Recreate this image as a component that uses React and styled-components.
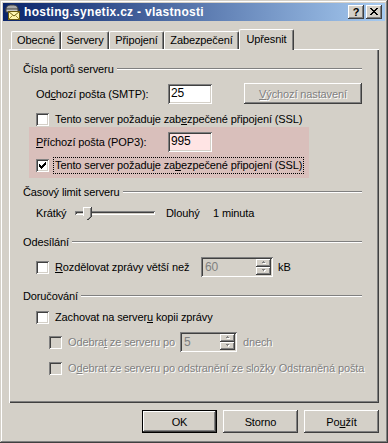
import React from 'react';
import styled, { createGlobalStyle } from 'styled-components';

const FONT = '"Liberation Sans", Arial, sans-serif';

const Global = createGlobalStyle`
  html, body { margin: 0; padding: 0; background: #d4d0c8; }
  body { font-family: ${FONT}; font-size: 11px; letter-spacing: -0.12px; color: #000; }
  * { box-sizing: border-box; }
`;

const RAISED = 'inset -1px -1px #404040, inset 1px 1px #fff, inset -2px -2px #808080, inset 2px 2px #d4d0c8';
const SUNKEN = 'inset 1px 1px #808080, inset -1px -1px #fff, inset 2px 2px #404040, inset -2px -2px #d4d0c8';

const Window = styled.div`
  width: 388px;
  height: 443px;
  padding: 3px;
  background: #d4d0c8;
  box-shadow: inset -1px -1px #404040, inset 1px 1px #d4d0c8, inset -2px -2px #808080, inset 2px 2px #fff;
  display: flex;
  flex-direction: column;
`;

const TitleBar = styled.div`
  height: 18px;
  display: flex;
  align-items: center;
  padding: 0 3px 0 1px;
  background: linear-gradient(to right, #0a246a, #a6caf0);
`;

const TitleText = styled.div`
  flex: 1;
  margin-left: 4px;
  color: #fff;
  font-weight: bold;
  font-size: 12px;
  letter-spacing: 0.3px;
  white-space: nowrap;
`;

const CaptionButton = styled.div`
  width: 16px;
  height: 14px;
  margin-left: ${(p) => p.$gap || 0}px;
  background: #d4d0c8;
  box-shadow: ${RAISED};
  display: flex;
  align-items: center;
  justify-content: center;
  font-weight: bold;
  font-size: 11px;
  line-height: 14px;
  padding-bottom: 1px;
`;

const Body = styled.div`
  flex: 1;
  display: flex;
  flex-direction: column;
  padding: 8px 6px 7px 6px;
`;

const TabStrip = styled.div`
  height: 20px;
  display: flex;
  align-items: flex-end;
  padding-left: 2px;
  position: relative;
  z-index: 2;
`;

const Tab = styled.div`
  width: ${(p) => p.$w}px;
  height: ${(p) => (p.$active ? 21 : 18)}px;
  margin-bottom: ${(p) => (p.$active ? -1 : 0)}px;
  background: #d4d0c8;
  border-top: 1px solid #fff;
  border-left: 1px solid #fff;
  border-right: 1px solid #404040;
  border-radius: 2px 2px 0 0;
  box-shadow: inset -1px 0 #808080;
  text-align: center;
  padding-top: ${(p) => (p.$active ? 3 : 2)}px;
  white-space: nowrap;
  position: relative;
`;

const Panel = styled.div`
  height: 354px;
  padding: 13px 17px 0 14px;
  background: #d4d0c8;
  box-shadow: inset 1px 1px #fff, inset -1px -1px #404040, inset -2px -2px #808080;
  display: flex;
  flex-direction: column;
  position: relative;
  z-index: 1;
`;

const Heading = styled.div`
  height: 14px;
  margin-top: ${(p) => p.$mt || 0}px;
  display: flex;
  align-items: center;
  gap: 3px;
  white-space: nowrap;
`;

const HeadingLine = styled.div`
  flex: 1;
  height: 2px;
  border-top: 1px solid #808080;
  border-bottom: 1px solid #fff;
`;

const Row = styled.div`
  display: flex;
  align-items: center;
  margin-top: ${(p) => p.$mt || 0}px;
  margin-left: ${(p) => p.$indent || 0}px;
  height: ${(p) => p.$h || 13}px;
  white-space: nowrap;
`;

const Highlight = styled.div`
  margin-top: 1px;
  margin-left: 6px;
  width: 280px;
  padding: 5px 0 6px 7px;
  background: #d9bfbb;
`;

const FieldLabel = styled.span`
  width: ${(p) => p.$w}px;
  flex: none;
  color: ${(p) => (p.$disabled ? '#808080' : '#000')};
  text-shadow: ${(p) => (p.$disabled ? '1px 1px #fff' : 'none')};
  margin-left: ${(p) => p.$ml || 0}px;
`;

const U = styled.span`
  text-decoration: underline;
`;

const Edit = styled.div`
  width: ${(p) => p.$w}px;
  height: 20px;
  padding: 0 0 0 3px;
  line-height: 19px;
  background: ${(p) => p.$bg || '#fff'};
  box-shadow: ${SUNKEN};
  flex: none;
  font-size: 12px;
`;

const Button = styled.div`
  width: ${(p) => p.$w || 75}px;
  height: ${(p) => p.$h || 23}px;
  margin-left: ${(p) => p.$ml || 0}px;
  display: flex;
  align-items: center;
  justify-content: center;
  background: #d4d0c8;
  border: ${(p) => (p.$default ? '1px solid #000' : 'none')};
  box-shadow: ${RAISED};
  color: ${(p) => (p.$disabled ? '#808080' : '#000')};
  text-shadow: ${(p) => (p.$disabled ? '1px 1px #fff' : 'none')};
  flex: none;
`;

const CheckItem = styled.div`
  display: flex;
  align-items: center;
  width: ${(p) => (p.$w ? `${p.$w}px` : 'auto')};
  flex: none;
`;

const Box = styled.span`
  width: 13px;
  height: 13px;
  flex: none;
  background: ${(p) => (p.$disabled ? '#d4d0c8' : '#fff')};
  box-shadow: ${SUNKEN};
  display: flex;
  align-items: center;
  justify-content: center;
`;

const CheckLabel = styled.span`
  margin-left: 4px;
  padding: 0 1px;
  border: 1px dotted ${(p) => (p.$focus ? '#000' : 'transparent')};
  line-height: 15px;
  color: ${(p) => (p.$disabled ? '#808080' : '#000')};
  text-shadow: ${(p) => (p.$disabled ? '1px 1px #fff' : 'none')};
`;

const Spin = styled.div`
  width: ${(p) => p.$w}px;
  height: 20px;
  flex: none;
  display: flex;
  padding: 2px;
  background: #d4d0c8;
  box-shadow: ${SUNKEN};
`;

const SpinText = styled.div`
  flex: 1;
  padding-left: 2px;
  line-height: 16px;
  color: #808080;
  font-size: 12px;
`;

const SpinButtons = styled.div`
  width: 15px;
  display: flex;
  flex-direction: column;
`;

const SpinBtn = styled.div`
  flex: 1;
  background: #d4d0c8;
  box-shadow: ${RAISED};
  display: flex;
  align-items: center;
  justify-content: center;
`;

const Text = styled.span`
  margin-left: ${(p) => p.$ml || 0}px;
  width: ${(p) => (p.$w ? `${p.$w}px` : 'auto')};
  flex: none;
  color: ${(p) => (p.$disabled ? '#808080' : '#000')};
  text-shadow: ${(p) => (p.$disabled ? '1px 1px #fff' : 'none')};
`;

const Slider = styled.div`
  width: 80px;
  height: 20px;
  flex: none;
  position: relative;
  display: flex;
  align-items: center;
`;

const Track = styled.div`
  width: 100%;
  height: 4px;
  box-shadow: ${SUNKEN};
  background: #d4d0c8;
`;

const Thumb = styled.svg`
  position: absolute;
  left: ${(p) => p.$left}px;
  top: 4px;
`;

const ButtonRow = styled.div`
  margin-top: 7px;
  display: flex;
  justify-content: flex-end;
  gap: 6px;
`;

const Check = () => (
  <svg width="9" height="9" viewBox="0 0 9 9" shapeRendering="crispEdges">
    <path d="M1 3h1v1h1v1h1v-1h1v-1h1v-1h1v-1h1v3h-1v1h-1v1h-1v1h-1v1h-1v-1h-1v-1h-1z" fill="#000" />
  </svg>
);

const Arrow = ({ down }) => (
  <svg width="5" height="4" viewBox="0 0 5 4" shapeRendering="crispEdges">
    {down ? (
      <>
        <path d="M1 1h4l-2 2z" fill="#fff" />
        <path d="M0 0h4l-2 2z" fill="#808080" />
      </>
    ) : (
      <>
        <path d="M1 3h4l-2 -2z" fill="#fff" />
        <path d="M0 2h4l-2 -2z" fill="#808080" />
      </>
    )}
  </svg>
);

const SpinBox = ({ w, value }) => (
  <Spin $w={w}>
    <SpinText>{value}</SpinText>
    <SpinButtons>
      <SpinBtn><Arrow /></SpinBtn>
      <SpinBtn><Arrow down /></SpinBtn>
    </SpinButtons>
  </Spin>
);

const CheckBox = ({ checked, disabled, focus, w, children }) => (
  <CheckItem $w={w}>
    <Box $disabled={disabled}>{checked && <Check />}</Box>
    <CheckLabel $focus={focus} $disabled={disabled}>{children}</CheckLabel>
  </CheckItem>
);

const AppIcon = () => (
  <svg width="16" height="16" viewBox="0 0 16 16">
    <path d="M2 6 C2 2 4 1 8 1 C12 1 14 2 14 6 Z" fill="#a8a8a8" stroke="#404040" strokeWidth="1" />
    <rect x="2" y="5" width="12" height="3" fill="#c8c8c8" stroke="#404040" strokeWidth="1" />
    <rect x="4.5" y="7.5" width="11" height="8" fill="#fff6b0" stroke="#6a5a10" strokeWidth="1" />
    <path d="M4.5 7.5 L10 12 L15.5 7.5" fill="none" stroke="#6a5a10" strokeWidth="1" />
    <path d="M4.5 15.5 L8.5 11.5 M15.5 15.5 L11.5 11.5" fill="none" stroke="#a08a30" strokeWidth="1" />
  </svg>
);

const CloseGlyph = () => (
  <svg width="8" height="7" viewBox="0 0 8 7" shapeRendering="crispEdges">
    <path d="M0 0h2v1h1v1h2v-1h1v-1h2v1h-1v1h-1v1h-1v1h1v1h1v1h1v1h-2v-1h-1v-1h-2v1h-1v1h-2v-1h1v-1h1v-1h1v-1h-1v-1h-1v-1h-1z" fill="#000" />
  </svg>
);

const ThumbShape = () => (
  <Thumb $left={8} width="9" height="13" viewBox="0 0 9 13" shapeRendering="crispEdges">
    <path d="M0 0h9v9l-4 4h-1l-4 -4z" fill="#d4d0c8" />
    <path d="M0 0h8v1h-7v8h-1z" fill="#fff" />
    <path d="M8 0h1v9l-4 4h-1v-1h1l3 -3z" fill="#404040" />
    <path d="M7 1h1v8l-3 3h-1l3-3z" fill="#808080" />
  </Thumb>
);

export default function App() {
  return (
    <>
      <Global />
      <Window>
        <TitleBar>
          <AppIcon />
          <TitleText>hosting.synetix.cz - vlastnosti</TitleText>
          <CaptionButton>?</CaptionButton>
          <CaptionButton $gap={2}><CloseGlyph /></CaptionButton>
        </TitleBar>
        <Body>
          <TabStrip>
            <Tab $w={50}>Obecné</Tab>
            <Tab $w={48}>Servery</Tab>
            <Tab $w={55}>Připojení</Tab>
            <Tab $w={75}>Zabezpečení</Tab>
            <Tab $w={55} $active>Upřesnit</Tab>
          </TabStrip>
          <Panel>
            <Heading>Čísla portů serveru<HeadingLine /></Heading>
            <Row $mt={7} $h={21} $indent={13}>
              <FieldLabel $w={132}>Od<U>c</U>hozí pošta (SMTP):</FieldLabel>
              <Edit $w={44}>25</Edit>
              <Button $w={118} $h={21} $ml={32} $disabled><span><U>V</U>ýchozí nastavení</span></Button>
            </Row>
            <Row $mt={9} $indent={13}>
              <CheckBox>Tento server požaduje zab<U>e</U>zpečené připojení (SSL)</CheckBox>
            </Row>
            <Highlight>
              <Row $h={20}>
                <FieldLabel $w={132}><U>P</U>říchozí pošta (POP3):</FieldLabel>
                <Edit $w={44} $bg="#ffe4e4">995</Edit>
              </Row>
              <Row $mt={7}>
                <CheckBox checked focus>Tento server požaduje za<U>b</U>ezpečené připojení (SSL)</CheckBox>
              </Row>
            </Highlight>
            <Heading $mt={7}>Časový limit serveru<HeadingLine /></Heading>
            <Row $mt={4} $h={20} $indent={13}>
              <Text $w={39}>Krátký</Text>
              <Slider>
                <Track />
                <ThumbShape />
              </Slider>
              <Text $ml={11} $w={47}>Dlouhý</Text>
              <Text>1 minuta</Text>
            </Row>
            <Heading $mt={12}>Odesílání<HeadingLine /></Heading>
            <Row $mt={8} $h={20} $indent={13}>
              <CheckBox w={165}><U>R</U>ozdělovat zprávy větší než</CheckBox>
              <SpinBox w={72} value="60" />
              <Text $ml={5}>kB</Text>
            </Row>
            <Heading $mt={12}>Doručování<HeadingLine /></Heading>
            <Row $mt={8} $indent={13}>
              <CheckBox>Zachovat na server<U>u</U> kopii zprávy</CheckBox>
            </Row>
            <Row $mt={8} $h={20} $indent={26}>
              <CheckBox disabled w={131}>Odebra<U>t</U> ze serveru po</CheckBox>
              <SpinBox w={57} value="5" />
              <Text $ml={6} $disabled>dnech</Text>
            </Row>
            <Row $mt={10} $indent={26}>
              <CheckBox disabled>O<U>d</U>ebrat ze serveru po odstranění ze složky Odstraněná pošta</CheckBox>
            </Row>
          </Panel>
          <ButtonRow>
            <Button $default>OK</Button>
            <Button>Storno</Button>
            <Button><span>Po<U>u</U>žít</span></Button>
          </ButtonRow>
        </Body>
      </Window>
    </>
  );
}
